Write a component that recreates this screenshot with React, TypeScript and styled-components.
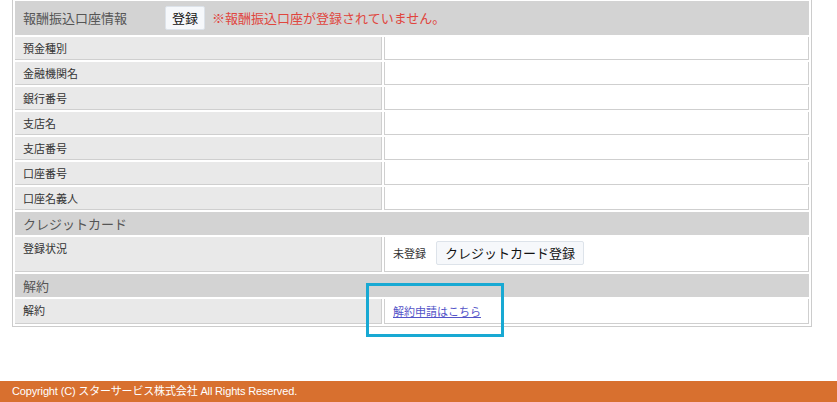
import React from "react";
import styled, { createGlobalStyle } from "styled-components";

const Global = createGlobalStyle`
  html, body { margin: 0; padding: 0; background: #fff; }
  body { font-family: "Liberation Sans", "Noto Sans CJK JP", sans-serif; overflow: hidden; }
`;

const Page = styled.div`
  width: 837px;
  height: 402px;
  display: flex;
  flex-direction: column;
`;

const Main = styled.div`
  position: relative;
  flex: 1;
  padding: 0 25px 0 12px;
`;

const Box = styled.div`
  border: 1px solid #cccccc;
  margin-top: -2px;
  width: 798px;
`;

const Table = styled.table`
  width: 100%;
  border-collapse: separate;
  border-spacing: 2px;
  font-family: "Noto Sans CJK JP", sans-serif;
`;

const SectionHead = styled.th<{ $tall?: boolean }>`
  background: #d3d3d3;
  text-align: left;
  font-weight: normal;
  font-size: 13px;
  color: #555;
  height: ${(p) => (p.$tall ? "34px" : "23px")};
  padding: 0 8px;
  vertical-align: middle;
  box-sizing: border-box;
`;

const HeadInner = styled.div`
  display: flex;
  align-items: center;
`;

const HeadTitle = styled.span`
  width: 142px;
  line-height: 18px;
`;

const SmallButton = styled.button<{ $pad?: number }>`
  font-family: "Noto Sans CJK JP", sans-serif;
  font-size: 13px;
  color: #111;
  background: #f6f8fb;
  border: 1px solid #dde3ea;
  border-radius: 2px;
  height: 24px;
  padding: 0 ${(p) => p.$pad ?? 6}px;
  line-height: 22px;
  margin: 0;
`;

const Warn = styled.span`
  color: #e0453d;
  margin-left: 7px;
  line-height: 18px;
`;

const Label = styled.td`
  width: 350px;
  background: #e9e9e9;
  border-right: 1px solid #cfcfcf;
  border-bottom: 1px solid #cfcfcf;
  font-size: 11px;
  color: #333;
  padding: 4px 8px 3px;
  line-height: 15px;
  vertical-align: top;
`;

const Value = styled.td`
  background: #fff;
  border-left: 1px solid #cfcfcf;
  border-right: 1px solid #cfcfcf;
  border-bottom: 1px solid #cfcfcf;
  font-size: 11px;
  color: #333;
  padding: 4px 8px 3px;
  line-height: 15px;
  height: 15px;
`;

const Status = styled.div`
  display: flex;
  align-items: flex-start;
  gap: 10px;
  height: 27px;
  line-height: 24px;
`;

const Link = styled.a`
  display: inline-block;
  color: #5454c8;
  text-decoration: underline;
  font-size: 11px;
  line-height: 17px;
`;

const Highlight = styled.div`
  position: absolute;
  left: 366px;
  top: 283px;
  width: 132px;
  height: 48px;
  border: 3px solid #18a9d3;
  pointer-events: none;
`;

const Footer = styled.footer`
  height: 21px;
  background: #d8702f;
  color: #fff;
  font-size: 11px;
  line-height: 21px;
  padding-left: 12px;
  letter-spacing: -0.15px;
  font-family: "Liberation Sans", "Noto Sans CJK JP", sans-serif;
`;

const bankRows = ["預金種別", "金融機関名", "銀行番号", "支店名", "支店番号", "口座番号", "口座名義人"];

export default function App() {
  return (
    <Page>
      <Global />
      <Main>
        <Box>
          <Table>
            <tbody>
              <tr>
                <SectionHead colSpan={2} $tall>
                  <HeadInner>
                    <HeadTitle>報酬振込口座情報</HeadTitle>
                    <SmallButton>登録</SmallButton>
                    <Warn>※報酬振込口座が登録されていません。</Warn>
                  </HeadInner>
                </SectionHead>
              </tr>
              {bankRows.map((r) => (
                <tr key={r}>
                  <Label>{r}</Label>
                  <Value />
                </tr>
              ))}
              <tr>
                <SectionHead colSpan={2}>クレジットカード</SectionHead>
              </tr>
              <tr>
                <Label>登録状況</Label>
                <Value>
                  <Status>
                    <span>未登録</span>
                    <SmallButton $pad={8}>クレジットカード登録</SmallButton>
                  </Status>
                </Value>
              </tr>
              <tr>
                <SectionHead colSpan={2}>解約</SectionHead>
              </tr>
              <tr>
                <Label>解約</Label>
                <Value>
                  <Link href="#">解約申請はこちら</Link>
                </Value>
              </tr>
            </tbody>
          </Table>
        </Box>
        <Highlight />
      </Main>
      <Footer>Copyright (C) スターサービス株式会社 All Rights Reserved.</Footer>
    </Page>
  );
}
